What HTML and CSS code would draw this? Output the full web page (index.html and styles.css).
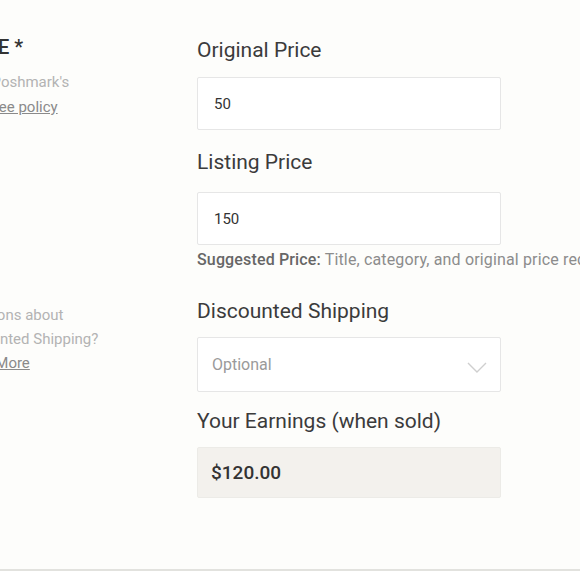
FILE: index.html
```html
<!DOCTYPE html>
<html lang="en">
<head>
<meta charset="utf-8">
<title>Price</title>
<link rel="stylesheet" href="styles.css">
</head>
<body>
<div class="page">
  <div class="section first">
    <div class="side">
      <h3 class="side-title">PRICE *</h3>
      <p class="side-help">Read Poshmark's<br><a class="side-link" href="#">seller fee policy</a></p>
    </div>
    <div class="fields">
      <div class="field">
        <div class="label">Original Price</div>
        <div class="input">50</div>
      </div>
      <div class="field second">
        <div class="label">Listing Price</div>
        <div class="input">150</div>
      </div>
      <p class="suggest"><span class="suggest-key">Suggested Price:</span> Title, category, and original price required</p>
    </div>
  </div>
  <div class="section next">
    <div class="side">
      <p class="side-help ship">Questions about<br>Discounted Shipping?<br><a class="side-link" href="#">Learn More</a></p>
    </div>
    <div class="fields">
      <div class="field">
        <div class="label ship-label">Discounted Shipping</div>
        <div class="input select">
          <span class="placeholder">Optional</span>
          <svg class="chev" width="20" height="11" viewBox="0 0 20 11"><polyline points="1,1 10,10 19,1" fill="none" stroke="#cfcfcf" stroke-width="1.4"/></svg>
        </div>
      </div>
      <div class="field earn">
        <div class="label earn-label">Your Earnings (when sold)</div>
        <div class="earnings">$120.00</div>
      </div>
    </div>
  </div>
</div>
</body>
</html>
```
FILE: styles.css
```css
html, body {
  margin: 0;
  padding: 0;
  background: #ffffff;
  overflow: hidden;
}
body {
  font-family: Roboto, "Liberation Sans", sans-serif;
  color: #333;
}
.page {
  height: 571px;
  box-sizing: border-box;
  background: #fdfdfb;
  border-bottom: 2px solid #e2e2de;
  padding-top: 38px;
  overflow: hidden;
}
.section {
  display: grid;
  grid-template-columns: 213px 304px;
  column-gap: 30px;
  margin-left: -46px;
}
.section.next {
  margin-top: 29px;
}
.side-title {
  margin: 0;
  font-size: 20px;
  line-height: 18px;
  font-weight: 500;
  color: #333;
  white-space: nowrap;
}
.side-help {
  margin: 14px 0 0;
  font-size: 15px;
  line-height: 25px;
  color: #b3b3b3;
  white-space: nowrap;
}
.side-help.ship {
  margin-top: 4px;
  line-height: 24px;
}
.side-link {
  color: #8a8a8a;
  text-decoration: underline;
}
.fields {
  display: flex;
  flex-direction: column;
}
.field.second {
  margin-top: 20px;
}
.field.earn {
  margin-top: 17px;
}
.label {
  font-size: 21px;
  line-height: 24px;
  color: #3b3b3b;
  margin-bottom: 15px;
  white-space: nowrap;
}
.field.second .label {
  margin-bottom: 18px;
}
.ship-label {
  margin-bottom: 14px;
}
.earn-label {
  margin-bottom: 14px;
}
.input {
  box-sizing: border-box;
  height: 53px;
  border: 1px solid #e6e6e6;
  border-radius: 2px;
  background: #fff;
  display: flex;
  align-items: center;
  padding: 0 16px;
  font-size: 15px;
  color: #333;
}
.select {
  height: 55px;
  justify-content: space-between;
  padding: 0 13px 0 14px;
}
.placeholder {
  color: #9a9a9a;
  font-size: 16px;
}
.chev {
  margin-top: 5px;
}
.earnings {
  box-sizing: border-box;
  height: 51px;
  border: 1px solid #ecebe7;
  border-radius: 2px;
  background: #f3f1ed;
  display: flex;
  align-items: center;
  padding: 0 13px;
  font-size: 19px;
  font-weight: 500;
  color: #333;
}
.suggest {
  margin: 5px 0 0;
  font-size: 16px;
  letter-spacing: 0.15px;
  line-height: 20px;
  color: #8c8c8c;
  white-space: nowrap;
}
.suggest-key {
  color: #666;
  font-weight: 500;
}
```
